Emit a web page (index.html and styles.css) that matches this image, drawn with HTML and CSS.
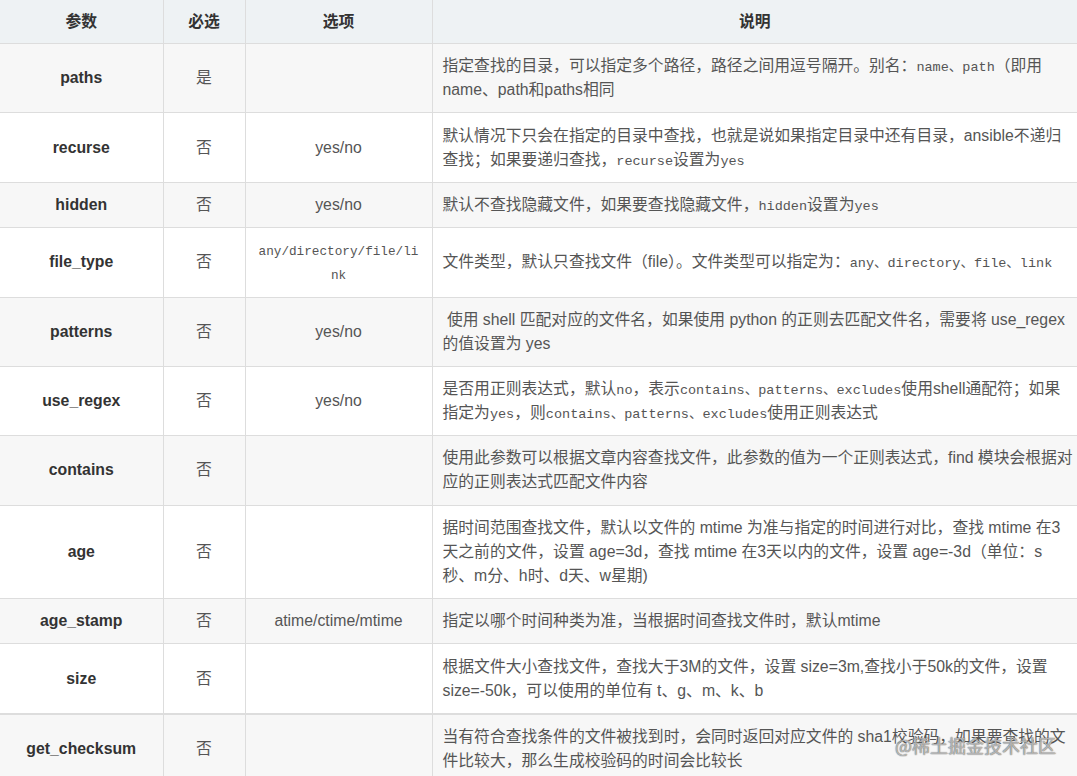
FILE: index.html
```html
<!DOCTYPE html>
<html lang="zh-CN">
<head>
<meta charset="utf-8">
<title>find 模块参数</title>
<link rel="stylesheet" href="styles.css">
</head>
<body>
<div class="page">
<table class="params">
  <colgroup>
    <col class="c-name">
    <col class="c-req">
    <col class="c-opt">
    <col class="c-desc">
  </colgroup>
  <thead>
    <tr><th>参数</th><th>必选</th><th>选项</th><th>说明</th></tr>
  </thead>
  <tbody>
    <tr>
      <td class="name">paths</td><td class="req">是</td><td class="opt"></td>
      <td class="desc">指定查找的目录，可以指定多个路径，路径之间用逗号隔开。别名：<code>name、path</code>（即用name、path和paths相同</td>
    </tr>
    <tr>
      <td class="name">recurse</td><td class="req">否</td><td class="opt">yes/no</td>
      <td class="desc">默认情况下只会在指定的目录中查找，也就是说如果指定目录中还有目录，ansible不递归查找；如果要递归查找，<code>recurse</code>设置为<code>yes</code></td>
    </tr>
    <tr>
      <td class="name">hidden</td><td class="req">否</td><td class="opt">yes/no</td>
      <td class="desc">默认不查找隐藏文件，如果要查找隐藏文件，<code>hidden</code>设置为<code>yes</code></td>
    </tr>
    <tr>
      <td class="name">file_type</td><td class="req">否</td><td class="opt"><code class="wrap">any/directory/file/link</code></td>
      <td class="desc">文件类型，默认只查找文件（file）。文件类型可以指定为：<code>any、directory、file、link</code></td>
    </tr>
    <tr>
      <td class="name">patterns</td><td class="req">否</td><td class="opt">yes/no</td>
      <td class="desc">&nbsp;使用 shell 匹配对应的文件名，如果使用 python 的正则去匹配文件名，需要将 use_regex 的值设置为 yes</td>
    </tr>
    <tr>
      <td class="name">use_regex</td><td class="req">否</td><td class="opt">yes/no</td>
      <td class="desc">是否用正则表达式，默认<code>no</code>，表示<code>contains、patterns、excludes</code>使用shell通配符；如果指定为<code>yes</code>，则<code>contains、patterns、excludes</code>使用正则表达式</td>
    </tr>
    <tr>
      <td class="name">contains</td><td class="req">否</td><td class="opt"></td>
      <td class="desc">使用此参数可以根据文章内容查找文件，此参数的值为一个正则表达式，find 模块会根据对应的正则表达式匹配文件内容</td>
    </tr>
    <tr>
      <td class="name">age</td><td class="req">否</td><td class="opt"></td>
      <td class="desc">据时间范围查找文件，默认以文件的 mtime 为准与指定的时间进行对比，查找 mtime 在3天之前的文件，设置 age=3d，查找 mtime 在3天以内的文件，设置 age=-3d（单位：s 秒、m分、h时、d天、w星期)</td>
    </tr>
    <tr>
      <td class="name">age_stamp</td><td class="req">否</td><td class="opt">atime/ctime/mtime</td>
      <td class="desc">指定以哪个时间种类为准，当根据时间查找文件时，默认mtime</td>
    </tr>
    <tr class="sep">
      <td class="name">size</td><td class="req">否</td><td class="opt"></td>
      <td class="desc">根据文件大小查找文件，查找大于3M的文件，设置 size=3m,查找小于50k的文件，设置 size=-50k，可以使用的单位有 t、g、m、k、b</td>
    </tr>
    <tr>
      <td class="name">get_checksum</td><td class="req">否</td><td class="opt"></td>
      <td class="desc">当有符合查找条件的文件被找到时，会同时返回对应文件的 sha1校验码，如果要查找的文件比较大，那么生成校验码的时间会比较长</td>
    </tr>
  </tbody>
</table>
<div class="watermark">@稀土掘金技术社区</div>
</div>
</body>
</html>
```

FILE: styles.css
```css
html, body {
  margin: 0;
  padding: 0;
  background: #ffffff;
}

.page {
  position: relative;
  width: 1077px;
  height: 776px;
  overflow: hidden;
  font-family: "Liberation Sans", "Noto Sans CJK SC", sans-serif;
  font-size: 15.8px;
  line-height: 24px;
  color: #555555;
}

.params {
  width: 1077px;
  border-collapse: collapse;
  table-layout: fixed;
}

.c-name { width: 163px; }
.c-req { width: 82px; }
.c-opt { width: 187px; }

.params th,
.params td {
  border-right: 1px solid #dddddd;
  border-bottom: 1px solid #dddddd;
  padding: 10.2px 10px;
  vertical-align: middle;
}

.params th:last-child,
.params td:last-child {
  border-right: none;
}

.params th {
  background: #eef2f4;
  color: #333333;
  font-weight: bold;
  text-align: center;
  padding: 9.5px 10px;
}

.params tbody tr:nth-child(odd) td {
  background: #f7f7f7;
}

.params tbody tr:nth-child(even) td {
  background: #ffffff;
}

.params tr.sep td {
  border-bottom: 2px solid #dddddd;
}

.name {
  text-align: center;
  font-weight: bold;
  color: #333333;
}

.req,
.opt {
  text-align: center;
}

.params td.desc {
  text-align: left;
  padding-right: 3px;
}

code {
  font-family: "Liberation Mono", "Noto Sans CJK SC", monospace;
  font-size: 13.5px;
  line-height: 1;
}

code.wrap {
  font-size: 12.7px;
  line-height: 1;
  word-break: break-all;
}

.watermark {
  position: absolute;
  right: 21px;
  bottom: 19px;
  font-family: "Noto Sans CJK SC", sans-serif;
  font-size: 18px;
  line-height: 24px;
  color: rgba(255, 255, 255, 0.55);
  text-shadow: 0 0 1px rgba(80, 80, 80, 0.9), 0 0 1px rgba(80, 80, 80, 0.7);
}
```
